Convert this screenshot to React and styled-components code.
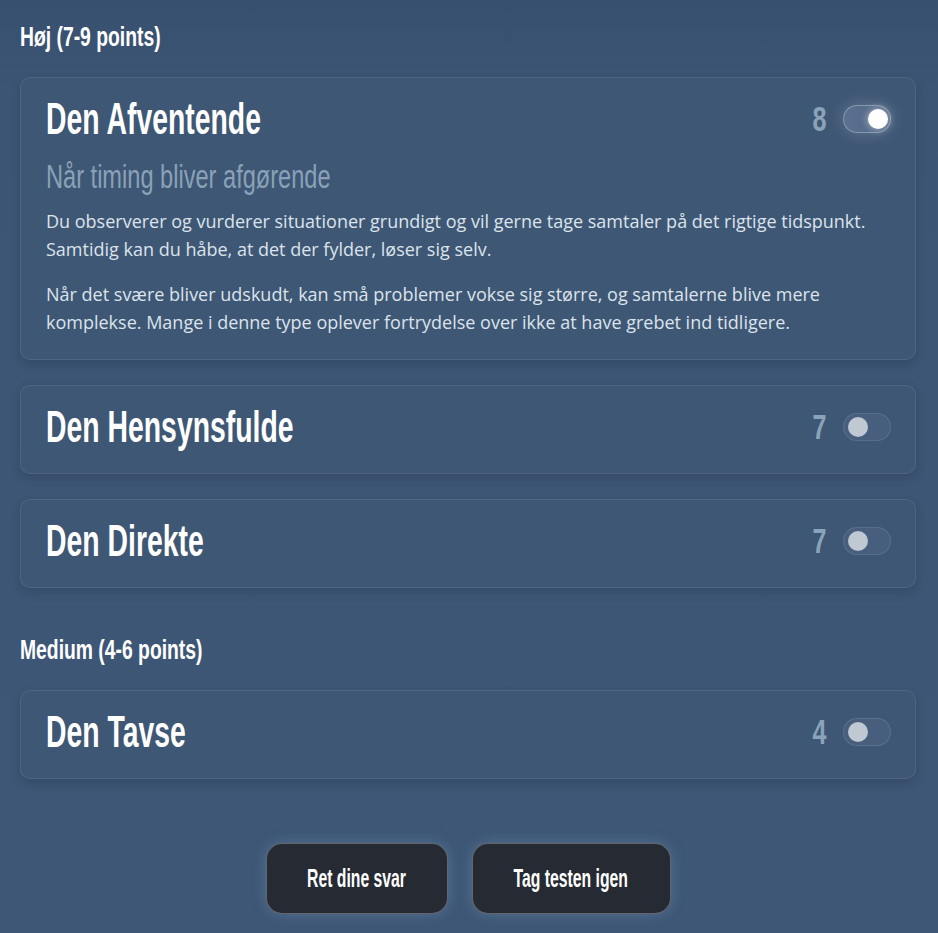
import React from "react";
import styled, { createGlobalStyle } from "styled-components";

const GlobalStyle = createGlobalStyle`
  html, body {
    margin: 0;
    padding: 0;
    background: linear-gradient(180deg, #385070 0%, #3c5574 10%, #3e5776 100%);
    min-height: 100%;
  }
  body {
    font-family: "Open Sans", "Noto Sans", sans-serif;
    color: #fff;
  }
`;

const narrow = `"Liberation Sans", Arial, sans-serif`;

// Liberation Sans squeezed horizontally to stand in for a tall condensed face
const Squeeze = styled.span`
  display: inline-block;
  white-space: nowrap;
  transform: scaleX(${(p) => p.$scale || 0.65});
  transform-origin: ${(p) => p.$origin || "left"} center;
`;

const Page = styled.div`
  width: 938px;
  min-height: 933px;
  box-sizing: border-box;
  padding: 22px 22px 20px 20px;
  display: flex;
  flex-direction: column;
`;

const SectionTitle = styled.h2`
  margin: 0 0 ${(p) => p.$gap || 25}px;
  font-family: ${narrow};
  font-weight: 700;
  font-size: 28px;
  line-height: 30px;
  color: #fff;
`;

const Section = styled.section`
  display: flex;
  flex-direction: column;
  gap: 25px;
  margin-bottom: ${(p) => p.$spacing || 0}px;
`;

const Card = styled.div`
  border: 1px solid rgba(255, 255, 255, 0.09);
  border-radius: 10px;
  background: #3e5775;
  box-shadow: 0 4px 10px rgba(20, 32, 50, 0.2);
  padding: 18px 24px 23px 25px;
`;

const CardHead = styled.div`
  display: flex;
  align-items: center;
  justify-content: space-between;
  height: 46px;
`;

const Name = styled.h3`
  margin: 0;
  font-family: ${narrow};
  font-weight: 700;
  font-size: 44px;
  line-height: 46px;
  color: #fff;
`;

const Controls = styled.div`
  display: flex;
  align-items: center;
  gap: 17px;
`;

const Score = styled.span`
  font-family: ${narrow};
  font-weight: 700;
  font-size: 35px;
  line-height: 40px;
  color: #8aa3ba;
`;

const Toggle = styled.div`
  position: relative;
  width: 48px;
  height: 28px;
  border-radius: 14px;
  box-sizing: border-box;
  border: 1px solid ${(p) => (p.$on ? "rgba(255,255,255,0.3)" : "rgba(255,255,255,0.1)")};
  background: ${(p) =>
    p.$on
      ? "linear-gradient(90deg, #5a7190 0%, #4d6585 100%)"
      : "rgba(255,255,255,0.05)"};
  box-shadow: ${(p) => (p.$on ? "0 0 16px rgba(255,255,255,0.2)" : "none")};
`;

const Knob = styled.span`
  position: absolute;
  top: 3px;
  left: ${(p) => (p.$on ? 24 : 4)}px;
  width: 20px;
  height: 20px;
  border-radius: 50%;
  background: ${(p) => (p.$on ? "#fff" : "#c0c8d3")};
  box-shadow: ${(p) => (p.$on ? "0 0 8px rgba(255,255,255,0.6)" : "none")};
`;

const Subtitle = styled.h4`
  margin: 15px 0 10px;
  font-family: ${narrow};
  font-weight: 400;
  font-size: 33px;
  line-height: 40px;
  color: #8aa1b7;
`;

const Text = styled.p`
  margin: 0 0 17px;
  font-size: 18px;
  line-height: 28px;
  color: #dce3eb;
  &:last-child {
    margin-bottom: 0;
  }
`;

const Actions = styled.div`
  display: flex;
  justify-content: center;
  gap: 24px;
  margin-top: 64px;
`;

const Button = styled.button`
  width: ${(p) => p.$width}px;
  height: 71px;
  padding: 0;
  border-radius: 16px;
  border: 1px solid rgba(255, 255, 255, 0.28);
  background: #262a33;
  color: #fff;
  font-family: ${narrow};
  font-weight: 700;
  font-size: 25px;
  box-shadow: 0 0 14px rgba(140, 180, 220, 0.28);
  cursor: pointer;
  display: flex;
  align-items: center;
  justify-content: center;
`;

const Row = ({ name, score, on, subtitle, paragraphs }) => (
  <Card>
    <CardHead>
      <Name>
        <Squeeze $scale={0.645}>{name}</Squeeze>
      </Name>
      <Controls>
        <Score>
          <Squeeze $scale={0.72} $origin="right">{score}</Squeeze>
        </Score>
        <Toggle $on={on}>
          <Knob $on={on} />
        </Toggle>
      </Controls>
    </CardHead>
    {on && (
      <>
        <Subtitle>
          <Squeeze $scale={0.715}>{subtitle}</Squeeze>
        </Subtitle>
        {paragraphs.map((t, i) => (
          <Text key={i}>{t}</Text>
        ))}
      </>
    )}
  </Card>
);

export default function App() {
  return (
    <Page>
      <GlobalStyle />
      <SectionTitle>
        <Squeeze $scale={0.69}>Høj (7-9 points)</Squeeze>
      </SectionTitle>
      <Section $spacing={47}>
        <Row
          name="Den Afventende"
          score={8}
          on
          subtitle="Når timing bliver afgørende"
          paragraphs={[
            "Du observerer og vurderer situationer grundigt og vil gerne tage samtaler på det rigtige tidspunkt. Samtidig kan du håbe, at det der fylder, løser sig selv.",
            "Når det svære bliver udskudt, kan små problemer vokse sig større, og samtalerne blive mere komplekse. Mange i denne type oplever fortrydelse over ikke at have grebet ind tidligere.",
          ]}
        />
        <Row name="Den Hensynsfulde" score={7} />
        <Row name="Den Direkte" score={7} />
      </Section>
      <SectionTitle>
        <Squeeze $scale={0.69}>Medium (4-6 points)</Squeeze>
      </SectionTitle>
      <Section>
        <Row name="Den Tavse" score={4} />
      </Section>
      <Actions>
        <Button $width={182}>
          <Squeeze $scale={0.63} $origin="center">Ret dine svar</Squeeze>
        </Button>
        <Button $width={199}>
          <Squeeze $scale={0.63} $origin="center">Tag testen igen</Squeeze>
        </Button>
      </Actions>
    </Page>
  );
}
